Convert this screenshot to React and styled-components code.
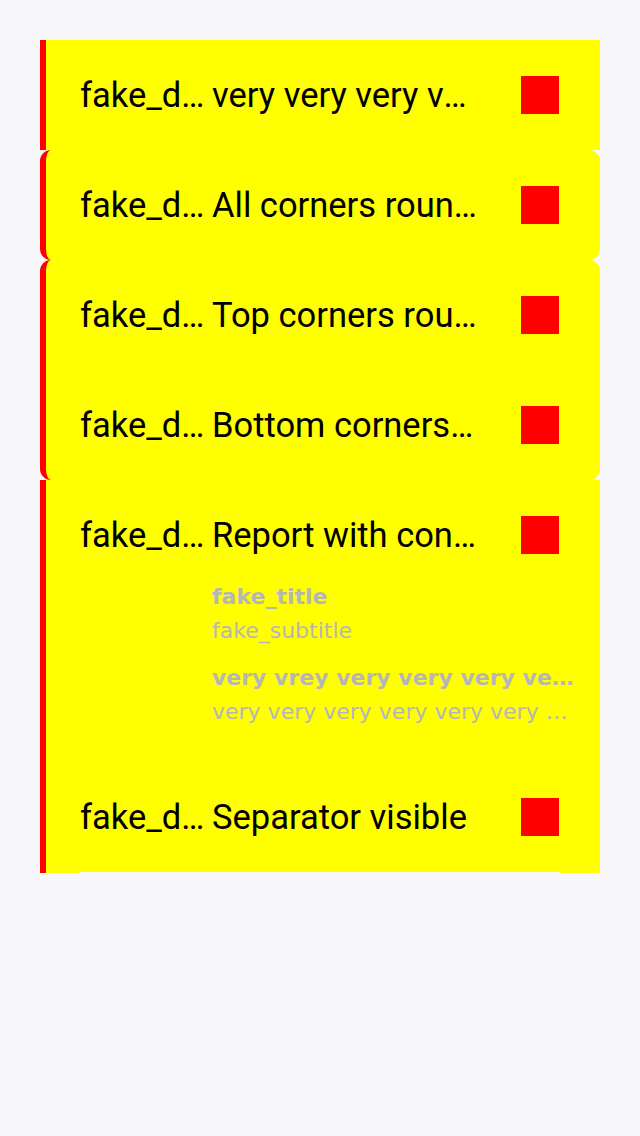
import React from "react";
import styled, { createGlobalStyle, css } from "styled-components";

const GlobalStyle = createGlobalStyle`
  html, body {
    margin: 0;
    padding: 0;
    background: #f7f7f9;
  }
  body {
    font-family: Roboto, "Liberation Sans", sans-serif;
  }
`;

const Page = styled.div`
  padding: 40px 40px 0 40px;
  min-height: 1136px;
  box-sizing: border-box;
`;

const List = styled.div`
  display: flex;
  flex-direction: column;
`;

const radii = {
  none: css``,
  all: css`border-radius: 11px;`,
  top: css`border-radius: 11px 11px 0 0;`,
  bottom: css`border-radius: 0 0 11px 11px;`,
};

const Cell = styled.div`
  display: flex;
  flex-direction: column;
  background: #ffff00;
  border-left: 6px solid #ff0000;
  ${(p) => radii[p.$round || "none"]}
`;

const Row = styled.div`
  display: flex;
  align-items: center;
  box-sizing: border-box;
  height: ${(p) => (p.$compact ? "100px" : "110px")};
  padding: ${(p) => (p.$compact ? "10px" : "0")} 41px 1px 34px;
`;

const Label = styled.div`
  width: 128px;
  flex: none;
  font-size: 34.5px;
  color: #000;
  white-space: nowrap;
  overflow: hidden;
  text-overflow: ellipsis;
`;

const Title = styled.div`
  flex: 1;
  min-width: 0;
  margin-left: 4px;
  font-size: 34.5px;
  color: #000;
  white-space: nowrap;
  overflow: hidden;
  text-overflow: ellipsis;
`;

const Square = styled.div`
  width: 38px;
  height: 38px;
  flex: none;
  margin-left: 40px;
  background: #ff0000;
`;

const Details = styled.div`
  display: flex;
  flex-direction: column;
  gap: 13px;
  padding: 0 24px 33px 166px;
`;

const Group = styled.div`
  display: flex;
  flex-direction: column;
  min-width: 0;
`;

const DetailLine = styled.div`
  height: 34px;
  line-height: 34px;
  font-family: "DejaVu Sans", Lato, sans-serif;
  font-size: 22px;
  font-weight: ${(p) => (p.$bold ? 700 : 400)};
  color: #b6b6b6;
  white-space: nowrap;
  overflow: hidden;
  text-overflow: ellipsis;
`;

const Separator = styled.div`
  height: 1px;
  margin: 0 40px 0 34px;
  background: #f7f7f9;
`;

const rows = [
  { title: "very very very very very very long title", round: "none" },
  { title: "All corners rounded", round: "all" },
  { title: "Top corners rounded", round: "top" },
  { title: "Bottom corners rounded", round: "bottom" },
];

export default function App() {
  return (
    <>
      <GlobalStyle />
      <Page>
        <List>
          {rows.map((r) => (
            <Cell key={r.title} $round={r.round}>
              <Row>
                <Label>fake_description</Label>
                <Title>{r.title}</Title>
                <Square />
              </Row>
            </Cell>
          ))}
          <Cell>
            <Row $compact>
              <Label>fake_description</Label>
              <Title>Report with content</Title>
              <Square />
            </Row>
            <Details>
              <Group>
                <DetailLine $bold>fake_title</DetailLine>
                <DetailLine>fake_subtitle</DetailLine>
              </Group>
              <Group>
                <DetailLine $bold>
                  very vrey very very very very very very long title
                </DetailLine>
                <DetailLine>
                  very very very very very very very very long subtitle
                </DetailLine>
              </Group>
            </Details>
          </Cell>
          <Cell>
            <Row>
              <Label>fake_description</Label>
              <Title>Separator visible</Title>
              <Square />
            </Row>
            <Separator />
          </Cell>
        </List>
      </Page>
    </>
  );
}
